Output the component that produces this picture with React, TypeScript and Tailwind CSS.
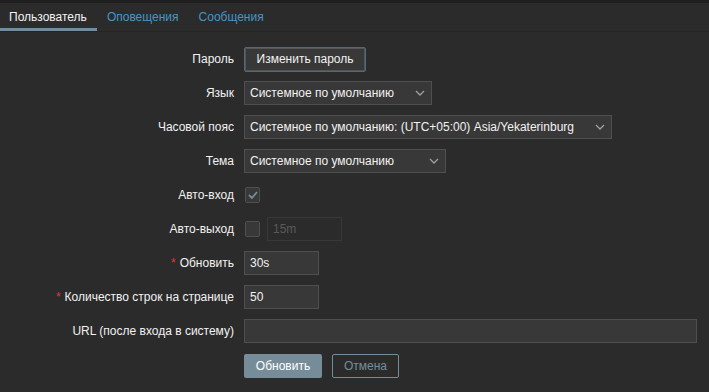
const Chevron = () => (
  <svg width="10" height="6" viewBox="0 0 10 6" className="shrink-0">
    <path d="M1 1l4 4 4-4" fill="none" stroke="#a0a0a0" strokeWidth="1.3" />
  </svg>
);

const Select = ({ value, width }: { value: string; width: string }) => (
  <div
    className={`flex h-[24px] items-center justify-between border border-[#4f4f4f] bg-[#383838] pl-[5px] pr-[6px] text-[#f2f2f2] ${width}`}
  >
    <span>{value}</span>
    <Chevron />
  </div>
);

const Input = ({ value, width }: { value: string; width: string }) => (
  <div
    className={`flex h-[24px] items-center border border-[#4f4f4f] bg-[#383838] px-[5px] text-[#f2f2f2] ${width}`}
  >
    {value}
  </div>
);

const Row = ({
  label,
  required,
  children,
}: {
  label: string;
  required?: boolean;
  children: React.ReactNode;
}) => (
  <div className="flex h-[34px] items-center">
    <div className="w-[234px] text-right text-[#f2f2f2]">
      {required && <span className="mr-[4px] text-[#e33734]">*</span>}
      {label}
    </div>
    <div className="ml-[10px] flex flex-1 items-center gap-[7px]">{children}</div>
  </div>
);

export default function App() {
  return (
    <div
      className="h-[392px] w-[709px] overflow-hidden bg-[#2b2b2b] text-[12px]"
      style={{ fontFamily: '"Liberation Sans", Arial, sans-serif' }}
    >
      <div className="h-[3px] bg-[#1f1f1f]" />
      <div className="flex h-[29px] border-b border-[#252525]">
        <div className="flex items-center border-b-[3px] border-[#768d99] pl-[9px] pr-[10px] pt-[3px] text-[#f2f2f2]">
          Пользователь
        </div>
        <div className="flex items-center px-[10px] text-[#4796c4]">Оповещения</div>
        <div className="flex items-center px-[10px] text-[#4796c4]">Сообщения</div>
      </div>

      <div className="pt-[10px]">
        <Row label="Пароль">
          <div className="flex h-[25px] w-[122px] items-center justify-center rounded-[2px] border border-[#4c6a83] bg-[#383838] text-[#f2f2f2] shadow-[inset_0_0_0_1px_#555]">
            Изменить пароль
          </div>
        </Row>
        <Row label="Язык">
          <Select value="Системное по умолчанию" width="w-[188px]" />
        </Row>
        <Row label="Часовой пояс">
          <Select
            value="Системное по умолчанию: (UTC+05:00) Asia/Yekaterinburg"
            width="w-[368px]"
          />
        </Row>
        <Row label="Тема">
          <Select value="Системное по умолчанию" width="w-[202px]" />
        </Row>
        <Row label="Авто-вход">
          <div className="ml-[1px] flex h-[16px] w-[15px] items-center justify-center rounded-[2px] border border-[#4f4f4f] bg-[#383838]">
            <svg width="10" height="8" viewBox="0 0 10 8">
              <path d="M1 4l3 3 5-6" fill="none" stroke="#768d99" strokeWidth="1.8" />
            </svg>
          </div>
        </Row>
        <Row label="Авто-выход">
          <div className="ml-[1px] h-[16px] w-[15px] rounded-[2px] border border-[#4f4f4f] bg-[#383838]" />
          <div className="flex h-[24px] w-[75px] items-center border border-[#383838] px-[5px] text-[#5a5a5a]">
            15m
          </div>
        </Row>
        <Row label="Обновить" required>
          <Input value="30s" width="w-[75px]" />
        </Row>
        <Row label="Количество строк на странице" required>
          <Input value="50" width="w-[75px]" />
        </Row>
        <Row label="URL (после входа в систему)">
          <Input value="" width="w-[453px]" />
        </Row>
        <div className="ml-[244px] flex items-center gap-[10px] pt-[6px]">
          <div className="flex h-[24px] w-[78px] items-center justify-center rounded-[2px] bg-[#768d99] text-[#ffffff]">
            Обновить
          </div>
          <div className="flex h-[24px] w-[67px] items-center justify-center rounded-[2px] border border-[#768d99] text-[#768d99]">
            Отмена
          </div>
        </div>
      </div>
    </div>
  );
}
